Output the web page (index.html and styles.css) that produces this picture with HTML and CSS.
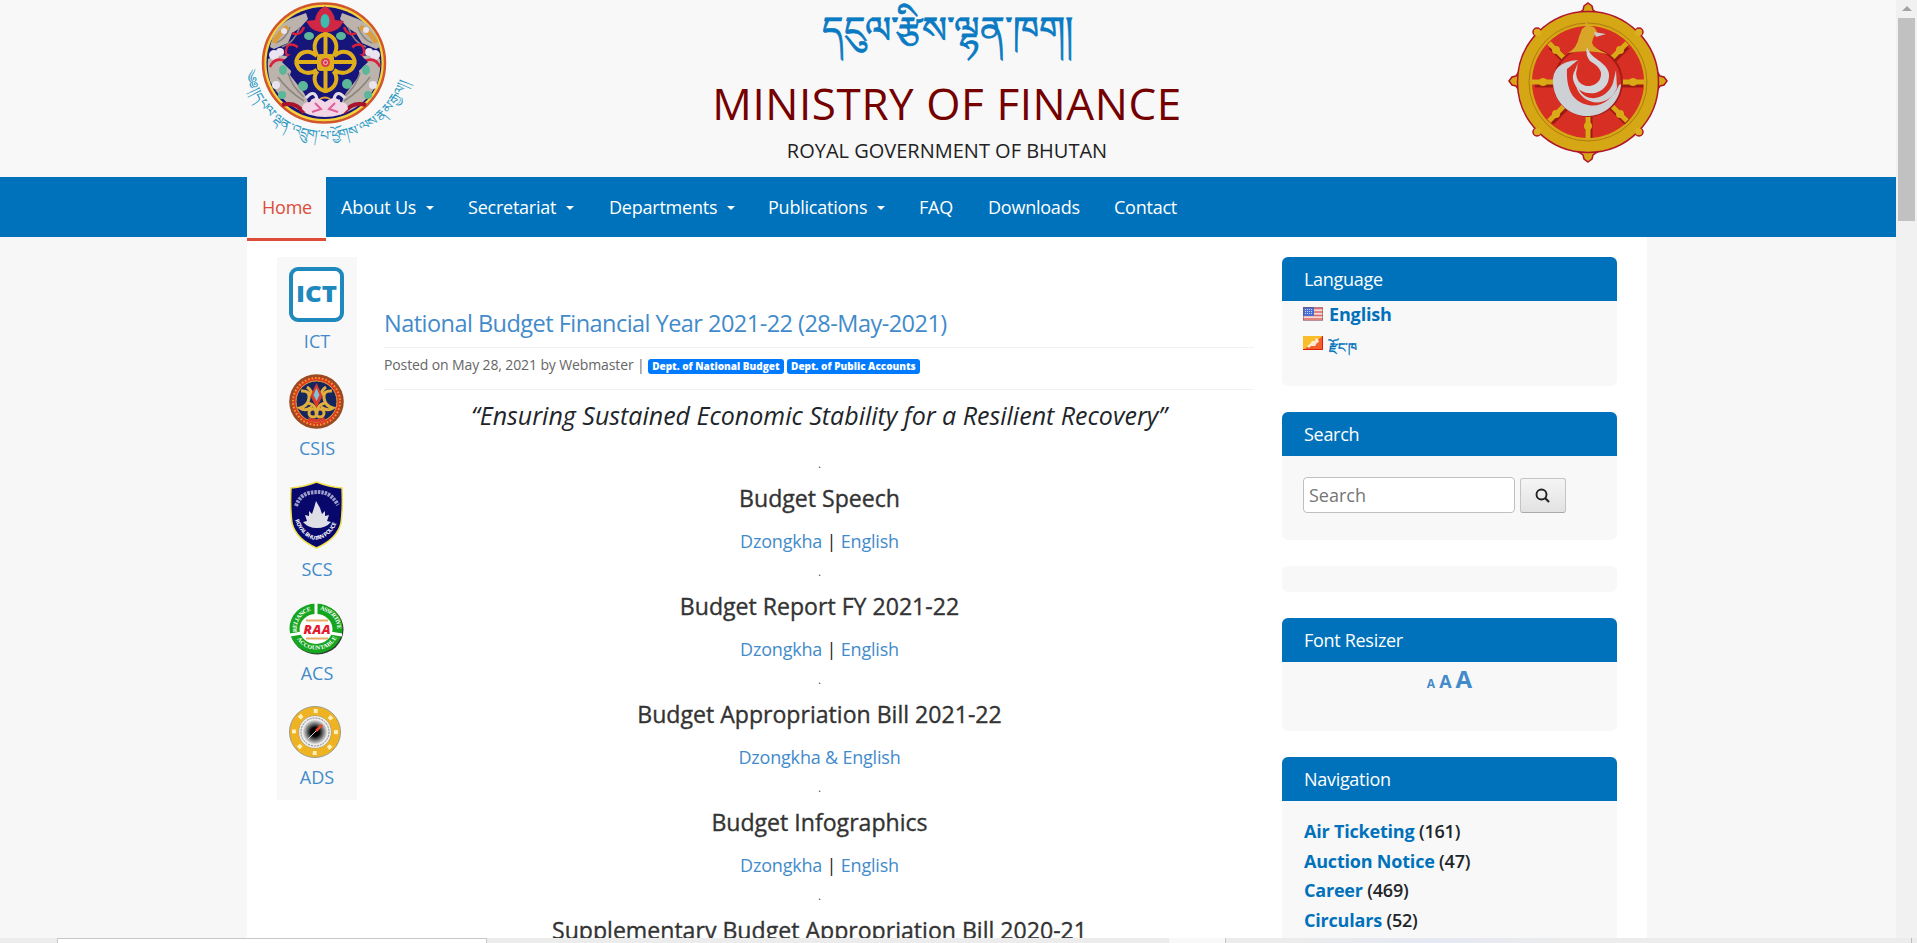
FILE: index.html
```html
<!DOCTYPE html>
<html lang="en">
<head>
<meta charset="utf-8">
<title>Ministry of Finance</title>
<link rel="stylesheet" href="styles.css">
</head>
<body>
<div class="window">
<div class="page">
<header class="header">
  <svg class="crest" width="164" height="148" viewBox="0 0 164 148">
    <defs><path id="arc" d="M-1 70C8 114 42 139 80 139C120 139 154 112 165 72"/></defs>
    <ellipse cx="78" cy="62" rx="61" ry="59.500" fill="#f4d23e" stroke="#d2562b" stroke-width="2.500"/>
    <ellipse cx="78" cy="62" rx="57.500" ry="56" fill="#16157a"/>
    <g fill="#bcb4ac"><path d="M24 46q4-20 20-28l16-6 2 6-8 9-8 5-4 10-14 6z"/><path d="M134 46q-4-20-22-28l-16-6-2 6 8 9 8 5 6 10 14 6z"/><path d="M22 58q18-8 26 2l-4 14 14 18q6 10 6 22-28-10-40-34-3-12-2-22z"/><path d="M134 58q-16-8-24 2l4 14-14 18q-6 10-6 22 28-10 38-34 3-12 2-22z"/></g>
    <g fill="none" stroke="#8b847f" stroke-width="1.500"><path d="M30 42q10-4 14-16M36 46q12-4 18-20M126 42q-10-4-14-16M120 46q-12-4-18-20M32 76q10 14 26 24M42 72q4 14 16 24M124 76q-10 14-26 24M114 72q-4 14-16 24"/></g>
    <g fill="none" stroke="#d99d3e" stroke-width="5"><path d="M28 42q4-10 14-16M130 42q-4-10-16-16"/></g>
    <g fill="#e9e4ef"><circle cx="28" cy="54" r="5"/><circle cx="34" cy="51" r="4"/><circle cx="129" cy="54" r="5"/><circle cx="123" cy="51" r="4"/><circle cx="30" cy="84" r="4"/><circle cx="127" cy="84" r="4"/><circle cx="38" cy="30" r="3"/><circle cx="120" cy="29" r="3"/></g>
    <g fill="none" stroke="#d9203c" stroke-width="2.500"><path d="M24 66q4-9 12-7t14-5q5-8-2-10t-8 5 5 5M134 66q-4-9-12-7t-14-5q-5-8 2-10t8 5-5 5M46 32q8 4 12-6M110 32q-8 4-12-6"/></g>
    <g fill="none" stroke="#a9142c" stroke-width="4"><path d="M36 104q14-4 22 8M120 104q-14-4-22 8"/></g>
    <path d="M79 21 122 61 79 103 36 61z" fill="#16157a"/>
    <g fill="none" stroke="#dfae1c" stroke-width="4"><path d="M79.500 31v61M49 61h61"/><path d="M79.500 33c-10 2-14 12-8 22M79.500 33c10 2 14 12 8 22M79.500 90c-10-2-14-12-8-20M79.500 90c10-2 14-12 8-20M50 61c2-10 12-14 21-6M50 61c2 10 12 14 21 8M109 61c-2-10-12-14-21-6M109 61c-2 10-12 14-21 8"/></g>
    <rect x="71" y="53" width="17" height="17" rx="4" fill="#dfae1c"/>
    <circle cx="79.500" cy="61.500" r="4.500" fill="#d83b53"/><circle cx="79.500" cy="61.500" r="2" fill="none" stroke="#f2c0c4"/>
    <path d="M79 5q9 5 10 14l9 1-4 6q-6 6-15 5-9 1-15-5l-4-6 9-1q1-9 10-14z" fill="#cf2744"/><ellipse cx="79" cy="20" rx="4.500" ry="7" fill="#3dbbb0"/>
    <g fill="#5cb79a"><ellipse cx="63" cy="35" rx="5" ry="4"/><ellipse cx="95" cy="35" rx="5" ry="4"/><ellipse cx="37" cy="69" rx="4" ry="5"/><ellipse cx="120" cy="69" rx="4" ry="5"/><circle cx="57" cy="85" r="5"/><circle cx="101" cy="83" r="5"/><circle cx="36" cy="94" r="4"/><circle cx="122" cy="94" r="4"/></g>
    <g fill="none" stroke="#e5dcea" stroke-width="3"><path d="M60 97q7-8 10-2t-5 5M99 97q-7-8-10-2t5 5"/></g>
    <path d="M56 108q0-7 8-7 3-6 10-3l5 3 5-3q7-3 10 3 8 0 8 7-6 8-23 8t-23-8z" fill="#f3d6e6"/><path d="M69 102l6 6-9 3M89 102l-6 6 9 3" stroke="#de5d98" fill="none" stroke-width="2"/><path d="M74 98q5-3 10 0" stroke="#e8a33a" stroke-width="2" fill="none"/>
    <text class="crest-script"><textPath href="#arc" textLength="222" lengthAdjust="spacingAndGlyphs">༄༅།།དཔལ་ལྡན་འབྲུག་པ་ཕྱོགས་ལས་རྣམ་རྒྱལ།།</textPath></text>
  </svg>
  <div class="brand">
    <div class="brand-script" lang="dz">དངུལ་རྩིས་ལྷན་ཁག།</div>
    <h1 class="brand-title">MINISTRY OF FINANCE</h1>
    <p class="brand-sub">ROYAL GOVERNMENT OF BHUTAN</p>
  </div>
  <svg class="wheel" width="160" height="164" viewBox="0 0 160 164">
    <g fill="#d6a714" stroke="#b0142b" stroke-width="1.500"><path d="M80 3l4 3 1 4 6 4H69l6-4 1-4zM80 162l4-3 1-4 6-4H69l6 4 1 4zM1 81l3-4 4-1 4-6v22l-4-6-4-1zM159 81l-3-4-4-1-4-6v22l4-6 4-1z"/><circle cx="29" cy="32" r="4"/><circle cx="131" cy="32" r="4"/><circle cx="29" cy="132" r="4"/><circle cx="131" cy="132" r="4"/></g>
    <circle cx="80" cy="82" r="70.500" fill="#d6a714" stroke="#b0142b" stroke-width="1.500"/>
    <g fill="#dcae22"><circle cx="29.500" cy="32.500" r="3.500"/><circle cx="130.500" cy="32.500" r="3.500"/><circle cx="29.500" cy="131.500" r="3.500"/><circle cx="130.500" cy="131.500" r="3.500"/></g>
    <circle cx="80" cy="82" r="59" fill="none" stroke="#b07a12"/>
    <circle cx="80" cy="82" r="56" fill="#d72f23"/>
    <g stroke="#9c1a14" stroke-width="7" transform="translate(1 2)"><path d="M26 82h108M80 82v54M42 44l76 76M118 44l-76 76"/></g>
    <g stroke="#d9a916" stroke-width="5"><path d="M24 82h112M80 82v56M41 43l78 78M119 43l-78 78"/></g>
    <g fill="#d9a916"><circle cx="35" cy="82" r="4"/><circle cx="125" cy="82" r="4"/><circle cx="80" cy="126" r="4"/><circle cx="48" cy="50" r="4"/><circle cx="112" cy="50" r="4"/><circle cx="48" cy="114" r="4"/><circle cx="112" cy="114" r="4"/></g>
    <circle cx="80" cy="82" r="35" fill="#a51b17"/><circle cx="80" cy="82" r="33" fill="#d72f23"/>
    <path d="M60 53q9-5 11-16l3-8 4-3-1-7 4 7q7 0 8 7-4 3-5 10 1 5 16 11-20-5-40-1z" fill="#d9a529"/><path d="M86 32l12 2-10 3z" fill="#ccc"/>
    <path d="M70 60q-27 2-25 24c2 20 18 33 36 32 18-1 31-15 32-32l-2 1c-6 14-18 23-31 20-15-3-22-15-21-36zM72 60q-9 12-4 26c6 20 32 23 41 2l-1-18-3 13c-5 15-24 21-33 8-6-9-7-19 0-31z" fill="#cdd0d4"/>
    <path d="M79 47q-2 8 3 14c10 6 13 11 10 18-5 10-20 9-23-1q-2-5 1-12-6 7-5 13c3 17 28 20 35 3 4-12-3-17-14-25q-5-4-7-10z" fill="#d2d5d9"/>
  </svg>
</header>
<nav class="nav"><div class="nav-inner">
  <a class="nav-item active">Home</a>
  <a class="nav-item about">About Us<i class="caret"></i></a>
  <a class="nav-item secretariat">Secretariat<i class="caret"></i></a>
  <a class="nav-item departments">Departments<i class="caret"></i></a>
  <a class="nav-item publications">Publications<i class="caret"></i></a>
  <a class="nav-item faq">FAQ</a>
  <a class="nav-item downloads">Downloads</a>
  <a class="nav-item">Contact</a>
</div></nav>
<main class="content">
  <aside class="systems">
    <a class="sys ict"><svg width="55" height="55" viewBox="0 0 55 55"><rect x="2" y="2" width="51" height="51" rx="7" fill="#fff" stroke="#1f88bd" stroke-width="4"/><text x="27.500" y="35" text-anchor="middle" class="ict-mark" textLength="41" lengthAdjust="spacingAndGlyphs">ICT</text></svg><span>ICT</span></a>
    <a class="sys csis"><svg width="55" height="55" viewBox="0 0 55 55"><circle cx="27.500" cy="27.500" r="27.300" fill="#9a4b22"/><circle cx="27.500" cy="27.500" r="24.500" fill="#dd3a21"/><circle cx="27.500" cy="27.500" r="23.500" fill="none" stroke="#e8a234" stroke-width="2" stroke-dasharray="1.500 2"/><circle cx="27.500" cy="27.500" r="20.500" fill="#15265f" stroke="#dba83b"/><g fill="none" stroke="#e0ae3f" stroke-width="3"><path d="M12 17q9-1 8 7t-9 10q5 4 12-1M43 17q-9-1-8 7t9 10q-5 4-12-1M18 13q6 4 4 9M37 13q-6 4-4 9M19 29q8 2 8 9M36 29q-8 2-8 9"/><circle cx="24" cy="39" r="4"/><circle cx="31" cy="39" r="4"/></g><path d="M27.500 9l6 13-6 12-6-12z" fill="#d83a2c"/><path d="M27.500 14l3 7-3 6-3-6z" fill="#7fc4d8"/><path d="M19 45q8 3 17 0" stroke="#d83a2c" stroke-width="3" fill="none"/></svg><span>CSIS</span></a>
    <a class="sys scs"><svg width="55" height="68" viewBox="0 0 55 68"><defs><path id="rbp" d="M6 39Q13 57 27 59Q42 57 49 39"/></defs><path d="M27.500 1Q40 6 53 7q1 20-1 35-4 16-24.500 25Q7 58 3 42 1 27 2 7 15 6 27.500 1z" fill="#08086c" stroke="#efe04c" stroke-width="1.500"/><path d="M7 25Q11 14 20 12T36 12T49 24" stroke="#9d9dca" stroke-width="4" stroke-dasharray="2.500 1" fill="none"/><path d="M27 20l4 7 2 6 3-3 0 5 4-1-2 6 4 1q-5 6-14 6t-14-6l4-1-2-6 4 1v-5l3 3 2-6z" fill="#dedfe6"/><text class="rbp-text"><textPath href="#rbp" textLength="58">ROYAL BHUTAN POLICE</textPath></text></svg><span>SCS</span></a>
    <a class="sys acs"><svg width="55" height="52" viewBox="0 0 55 52"><defs><path id="raat" d="M8 29A20 19 0 0 1 25 7"/><path id="raat2" d="M31 7A20 19 0 0 1 48 29"/><path id="raab" d="M8 36A22 20 0 0 0 47 36"/></defs><ellipse cx="28" cy="26.500" rx="26.500" ry="25" fill="#333"/><ellipse cx="27" cy="25.500" rx="26.500" ry="25" fill="#15a51f"/><ellipse cx="27" cy="26" rx="16.500" ry="15" fill="#fff"/><path d="M27 0v13M1 32l12-2M53 32l-12-2" stroke="#fff" stroke-width="3"/><path d="M17 17.500h22M17 35.500h22" stroke="#e8ab68" stroke-width="2"/><text x="28" y="31" text-anchor="middle" class="raa" textLength="27">RAA</text><text class="raa-ring"><textPath href="#raat" textLength="28">RELIANCE</textPath></text><text class="raa-ring"><textPath href="#raat2" textLength="28">ASSERTIVE</textPath></text><text class="raa-ring"><textPath href="#raab" textLength="48">ACCOUNTABLE</textPath></text></svg><span>ACS</span></a>
    <a class="sys ads"><svg width="55" height="52" viewBox="0 0 55 52"><defs><radialGradient id="dial"><stop offset=".35" stop-color="#000"/><stop offset="1" stop-color="#ddd"/></radialGradient></defs><circle cx="26" cy="26" r="25.500" fill="#efb322" stroke="#a09a88"/><circle cx="26" cy="26" r="21" fill="none" stroke="#fff0bf" stroke-width="4" stroke-dasharray="4 12.490" transform="rotate(-5 26 26)"/><circle cx="26" cy="26" r="16.500" fill="#ececec" stroke="#c3a85f"/><circle cx="26" cy="26" r="14" fill="none" stroke="#888" stroke-dasharray="2 1"/><circle cx="26" cy="26" r="12" fill="url(#dial)"/><path d="M19 33L33 19" stroke="#ddd"/><path d="M27 25l6-6" stroke="#e94728" stroke-width="2.500"/></svg><span>ADS</span></a>
  </aside>
  <article class="post">
    <h2 class="post-title">National Budget Financial Year 2021-22 (28-May-2021)</h2>
    <div class="meta">Posted on May 28, 2021 by Webmaster | <span class="badge b1">Dept. of National Budget</span> <span class="badge b2">Dept. of Public Accounts</span></div>
    <p class="quote">“Ensuring Sustained Economic Stability for a Resilient Recovery”</p>
    <section class="item"><p class="dot">.</p><h3>Budget Speech</h3><p class="links"><a>Dzongkha</a> | <a>English</a></p></section>
    <section class="item"><p class="dot">.</p><h3>Budget Report FY 2021-22</h3><p class="links"><a>Dzongkha</a> | <a>English</a></p></section>
    <section class="item"><p class="dot">.</p><h3>Budget Appropriation Bill 2021-22</h3><p class="links"><a>Dzongkha &amp; English</a></p></section>
    <section class="item"><p class="dot">.</p><h3>Budget Infographics</h3><p class="links"><a>Dzongkha</a> | <a>English</a></p></section>
    <section class="item"><p class="dot">.</p><h3>Supplementary Budget Appropriation Bill 2020-21</h3></section>
  </article>
  <aside class="side">
    <section class="widget language"><h4>Language</h4>
      <a class="lang"><svg width="20" height="14" viewBox="0 0 20 14"><rect width="20" height="14" fill="#f3dada"/><path d="M0 1.500h20M0 5h20M0 8.500h20M0 12h20" stroke="#dd6a60" stroke-width="1.700"/><rect width="11" height="9" fill="#4b6fd0"/><path d="M2 2.500h8M2 4.500h8M2 6.500h8" stroke="#c5d2f5" stroke-dasharray="1 1"/><rect x=".5" y=".5" width="19" height="13" fill="none" stroke="#7a4a5a" stroke-opacity=".5"/></svg><b>English</b></a>
      <a class="lang dz"><svg width="20" height="14" viewBox="0 0 20 14"><rect width="20" height="14" fill="#f9be2a"/><path d="M20 0v14H0z" fill="#f4602a"/><path d="M4 10l3-2 2-3 3 0 1-3 2 1 1 3-2 1-2 3-4 0-2 2z" fill="#fdebd0"/><path d="M0 13.500h19.500V0" stroke="#d81f10" fill="none"/></svg><b lang="dz">རྫོང་ཁ</b></a>
    </section>
    <section class="widget search"><h4>Search</h4>
      <div class="search-row"><input class="field" placeholder="Search"><button class="go" aria-label="Search"><svg width="16" height="16" viewBox="0 0 16 16"><circle cx="6.500" cy="6.500" r="5" fill="none" stroke="#222" stroke-width="1.900"/><path d="M10 10l4 4" stroke="#222" stroke-width="2.200"/></svg></button></div>
    </section>
    <section class="widget empty"></section>
    <section class="widget resizer"><h4>Font Resizer</h4><div class="sizes"><a class="s1">A</a><a class="s2">A</a><a class="s3">A</a></div></section>
    <section class="widget navigation"><h4>Navigation</h4>
      <ul class="cats"><li><a>Air Ticketing</a> (161)</li><li><a>Auction Notice</a> (47)</li><li><a>Career</a> (469)</li><li><a>Circulars</a> (52)</li></ul>
    </section>
  </aside>
</main>
</div>
<div class="scrollbar"><i class="arrow"></i><div class="thumb"></div></div>
</div>
<footer class="taskbar"><div class="task"></div><div class="slot"></div><div class="tray"></div></footer>
</body>
</html>
```
FILE: styles.css
```css
* { box-sizing: border-box; }
body { margin: 0; height: 943px; overflow: hidden; background: #f7f7f7; color: #212529; font-family: "Open Sans", "Noto Sans", sans-serif; font-size: 18px; }
h1, h2, h3, h4, p, ul { margin: 0; padding: 0; font-weight: 400; list-style: none; }
.window { display: flex; height: 938px; overflow: hidden; }
.page { width: 1896px; height: 938px; overflow: hidden; }
.header { height: 177px; background: #f8f8f8; display: flex; justify-content: space-between; padding: 0 228px 0 246px; }
.crest { margin-top: 1px; overflow: visible; }
.crest-script { font-size: 13px; fill: #2d98c2; }
.brand { text-align: center; width: 560px; margin-left: -24px; }
.brand-script { color: #0a7ac2; font-size: 37.2px; line-height: 58px; height: 75px; white-space: nowrap; -webkit-text-stroke: .7px #0a7ac2; }
.brand-title { color: #750000; font-size: 44px; line-height: 56px; letter-spacing: .58px; }
.brand-sub { font-size: 20px; line-height: 40px; color: #222; }
.nav { height: 60px; background: #0072bc; }
.nav-inner { width: 1400px; height: 60px; margin-left: 247px; display: flex; }
.nav-item { color: #fff; line-height: 60px; height: 60px; padding: 0 14px; letter-spacing: -.23px; white-space: nowrap; }
.nav-item.active { width: 79px; height: 64px; background: #f8f8f8; color: #dd4b39; border-bottom: 3px solid #dd4b39; padding-left: 15px; }
.caret { display: inline-block; margin-left: 10px; vertical-align: 4px; border: 4px solid transparent; border-top-color: #fff; border-bottom: 0; }
.about { width: 128px; padding-left: 15px; }
.secretariat { width: 141px; }
.departments { width: 159px; }
.publications { width: 151px; padding-left: 14px; }
.faq { width: 69px; }
.downloads { width: 126px; }
.content { width: 1400px; height: 701px; margin-left: 247px; background: #fff; display: flex; padding: 20px 30px 0; align-items: flex-start; }
.systems { width: 80px; height: 543px; background: #f8f8f8; padding-top: 10px; display: flex; flex-direction: column; }
.sys { display: flex; flex-direction: column; align-items: center; color: #428bca; }
.sys svg { margin-right: 1px; }
.sys span { line-height: 25px; margin-top: 7px; }
.ict { height: 107px; }
.csis { height: 107px; }
.scs { height: 122px; }
.scs span { margin-top: 8px; }
.acs { height: 103px; }
.acs span { margin-top: 6px; }
.ict-mark { font: 900 22px "Open Sans", sans-serif; fill: #1f88bd; }
.rbp-text { font: 700 5.500px "Open Sans", sans-serif; fill: #fff; }
.raa { font: italic 800 13px "Open Sans", sans-serif; fill: #e3192e; }
.raa-ring { font: 800 6px "Liberation Serif", serif; fill: #fff; }
.post { width: 870px; margin-left: 27px; padding-top: 45px; }
.post-title { font-size: 23.5px; line-height: 43px; height: 46px; color: #428bca; border-bottom: 1px solid #f2f2f2; letter-spacing: -.53px; }
.meta { height: 42px; font-size: 14px; line-height: 34px; color: #666; border-bottom: 1px solid #f2f2f2; white-space: nowrap; letter-spacing: -.12px; }
.badge { display: inline-block; background: #007bff; color: #fff; font-weight: 800; font-size: 10px; line-height: 15px; height: 15px; padding: 0 4px; border-radius: 3px; letter-spacing: 0; }
.quote { font-size: 25px; font-style: italic; line-height: 51px; text-align: center; height: 64px; }
.item { height: 108px; text-align: center; padding-left: 1px; }
.dot { font-size: 10px; line-height: 21px; height: 24px; }
.item h3 { font-size: 23.1px; font-weight: 500; line-height: 40px; height: 42px; color: #333; -webkit-text-stroke: .35px #333; }
.links { line-height: 42px; letter-spacing: -.2px; }
.links a { color: #428bca; }
.side { width: 335px; margin-left: 28px; display: flex; flex-direction: column; gap: 26px; }
.widget { background: #f8f8f8; border-radius: 6px; overflow: hidden; }
.widget h4 { background: #0072bc; color: #fff; height: 44px; line-height: 45px; padding-left: 22px; font-size: 18px; letter-spacing: -.3px; }
.language { height: 129px; }
.search { height: 128px; }
.empty { height: 26px; }
.resizer { height: 113px; }
.navigation { height: 200px; }
.lang { display: flex; height: 30px; padding-left: 21px; gap: 6px; color: #0072bc; line-height: 27px; letter-spacing: -.15px; }
.lang svg { margin-top: 6px; }
.dz svg { margin-top: 5px; }
.dz b { font-size: 12.6px; font-weight: 400; line-height: 34px; letter-spacing: 0; -webkit-text-stroke: .4px #0072bc; }
.search-row { display: flex; gap: 5px; padding: 21px 0 0 21px; }
.field { width: 212px; height: 36px; border: 1px solid #bfbfbf; border-radius: 4px; font: 18px "Open Sans", sans-serif; padding: 0 5px; background: #fff; }
.field::placeholder { color: #757575; }
.go { width: 46px; height: 35px; margin-top: 1px; border: 1px solid #c4c4c4; border-bottom-color: #aaa; border-radius: 3px; background: linear-gradient(#f5f5f5, #e2e2e2); padding: 3px 0 0; }
.sizes { display: flex; justify-content: center; align-items: baseline; gap: 4px; color: #428bca; font-weight: 700; line-height: 33px; }
.s1 { font-size: 12px; }
.s2 { font-size: 18px; }
.s3 { font-size: 24px; }
.cats { padding: 16px 22px; font-weight: 600; letter-spacing: -.2px; }
.cats li { line-height: 29.700px; }
.cats a { color: #0072bc; font-weight: 700; }
.scrollbar { width: 21px; background: #f1f1f1; padding: 6px 2px; display: flex; flex-direction: column; align-items: center; }
.arrow { border: 5px solid transparent; border-top: 0; border-bottom-color: #a3a3a3; }
.thumb { width: 17px; height: 203px; margin-top: 7px; background: #c1c1c1; }
.taskbar { height: 5px; background: #ececec; padding-left: 57px; display: flex; }
.task { width: 430px; height: 5px; background: #fff; border: 1px solid #c8c8c8; border-bottom: 0; }
.slot { width: 57px; margin-left: 682px; background: #f8f8f8; border-right: 1px solid #c8c8c8; }
.tray { width: 686px; background: linear-gradient(90deg, #ececec 10%, #e4e8f2 30%, #ececec 50%); border-right: 1px solid #bbb; }
```
